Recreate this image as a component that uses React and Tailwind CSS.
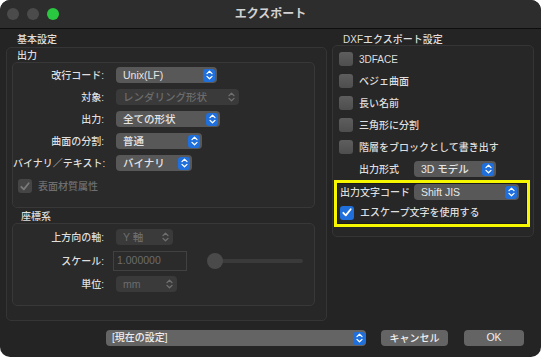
import React from "react";

const font = { fontFamily: '"Liberation Sans", "Noto Sans CJK JP", "Noto Sans", sans-serif' };

function Stepper({ disabled }) {
  if (disabled) {
    return (
      <span className="flex h-[13px] w-[12px] items-center justify-center">
        <svg width="7" height="10" viewBox="0 0 7 10" fill="none" stroke="#707070" strokeWidth="1.3" strokeLinecap="round" strokeLinejoin="round">
          <path d="M1 3.6 L3.5 1.2 L6 3.6" />
          <path d="M1 6.4 L3.5 8.8 L6 6.4" />
        </svg>
      </span>
    );
  }
  return (
    <span className="flex h-[13px] w-[12px] items-center justify-center rounded-[3px] bg-[#1f6fdc]">
      <svg width="7" height="10" viewBox="0 0 7 10" fill="none" stroke="#ffffff" strokeWidth="1.3" strokeLinecap="round" strokeLinejoin="round">
        <path d="M1 3.6 L3.5 1.2 L6 3.6" />
        <path d="M1 6.4 L3.5 8.8 L6 6.4" />
      </svg>
    </span>
  );
}

function Popup({ text, w, disabled }) {
  return (
    <div
      className={
        "flex h-[16px] items-center justify-between whitespace-nowrap rounded-[4px] pl-[7px] pr-[2px] text-[10.5px] font-medium " +
        (disabled ? "bg-[#3a3a3a] text-[#6c6c6c]" : "bg-[#585858] text-[#e6e6e6]")
      }
      style={{ width: w }}
    >
      <span className="leading-none">{text}</span>
      <Stepper disabled={disabled} />
    </div>
  );
}

function Check({ checked, disabled }) {
  if (checked) {
    return (
      <span className={"flex h-[14px] w-[14px] shrink-0 items-center justify-center rounded-[3px] " + (disabled ? "bg-[#454545]" : "bg-[#1f6fdc]")}>
        <svg width="10" height="9" viewBox="0 0 10 9" fill="none" stroke={disabled ? "#7a7a7a" : "#ffffff"} strokeWidth="1.8" strokeLinecap="round" strokeLinejoin="round">
          <path d="M1.3 4.8 L3.8 7.4 L8.7 1.3" />
        </svg>
      </span>
    );
  }
  return <span className="h-[14px] w-[14px] shrink-0 rounded-[3px] bg-gradient-to-b from-[#5e5e5e] to-[#4e4e4e]" />;
}

const lbl = "whitespace-nowrap text-[10px] font-medium text-[#dedede]";

function Row({ label, children, h = "h-[22px]" }) {
  return (
    <div className={"flex items-center " + h}>
      <div className={"w-[92px] pr-[1px] text-right " + lbl}>{label}</div>
      <div className="ml-[11px] flex items-center">{children}</div>
    </div>
  );
}

function CheckRow({ label, checked }) {
  return (
    <div className="flex h-[22px] items-center gap-[6px]">
      <Check checked={checked} />
      <span className={lbl}>{label}</span>
    </div>
  );
}

export default function App() {
  return (
    <div className="h-[359px] w-[541px] bg-white" style={font}>
      <div className="flex h-[357px] w-[541px] flex-col overflow-hidden rounded-[10px] bg-[#242424]">
        {/* title bar */}
        <div className="relative flex h-[29px] items-center border-b border-[#0d0d0d] bg-[#2d2d2d]">
          <div className="ml-[7px] flex gap-[8px]">
            <span className="h-[12px] w-[12px] rounded-full bg-[#4b4b4b]" />
            <span className="h-[12px] w-[12px] rounded-full bg-[#4b4b4b]" />
            <span className="h-[12px] w-[12px] rounded-full bg-[#2ac840]" />
          </div>
          <div className="absolute inset-0 flex items-center justify-center text-[12px] font-bold text-[#d2d2d2]">
            エクスポート
          </div>
        </div>

        {/* body */}
        <div className="flex pl-[6px]">
          {/* left */}
          <div className="flex w-[321px] flex-col">
            <div className={"h-[18px] pl-[11px] pt-[5px] leading-[12px] " + lbl}>基本設定</div>
            <div className="flex h-[274px] flex-col rounded-[5px] border border-[#353535] bg-[#272727] pl-[5px] pr-[11px]">
              <div className={"h-[14px] pl-[5px] pt-[2px] leading-[11px] " + lbl}>出力</div>
              <div className="flex h-[146px] flex-col rounded-[5px] border border-[#383838] bg-[#2a2a2a] pt-[1px]">
                <Row label="改行コード:"><Popup text="Unix(LF)" w={101} /></Row>
                <Row label="対象:"><Popup text="レンダリング形状" w={123} disabled /></Row>
                <Row label="出力:"><Popup text="全ての形状" w={104} /></Row>
                <Row label="曲面の分割:"><Popup text="普通" w={86} /></Row>
                <Row label="バイナリ／テキスト:"><Popup text="バイナリ" w={76} /></Row>
                <div className="flex h-[24px] items-center gap-[6px] pl-[5px]">
                  <Check checked disabled />
                  <span className="whitespace-nowrap text-[10px] font-medium text-[#6e6e6e]">表面材質属性</span>
                </div>
              </div>
              <div className={"h-[15px] pl-[9px] pt-[3px] leading-[11px] " + lbl}>座標系</div>
              <div className="flex h-[83px] flex-col rounded-[5px] border border-[#383838] bg-[#2a2a2a] pt-[1px]">
                <Row label="上方向の軸:" h="h-[24px]"><Popup text="Y 軸" w={57} disabled /></Row>
                <div className="flex h-[24px] items-center">
                  <div className={"w-[92px] pr-[1px] text-right " + lbl}>スケール:</div>
                  <div className="ml-[8px] flex h-[20px] w-[74px] items-center border border-[#414141] bg-[#2b2b2b] pl-[3px] text-[10.5px] text-[#6c6c6c]">
                    1.000000
                  </div>
                  <div className="relative ml-[20px] flex h-[16px] w-[96px] items-center">
                    <div className="ml-[8px] h-[4px] w-[88px] rounded-full bg-[#3a3a3a]" />
                    <div className="absolute left-0 top-0 h-[16px] w-[16px] rounded-full bg-[#4a4a4a]" />
                  </div>
                </div>
                <Row label="単位:" h="h-[22px]"><Popup text="mm" w={61} disabled /></Row>
              </div>
            </div>
          </div>

          {/* right */}
          <div className="ml-[5px] flex w-[202px] flex-col">
            <div className={"h-[16px] pl-[11px] pt-[5px] leading-[12px] " + lbl}>DXFエクスポート設定</div>
            <div className="flex h-[192px] flex-col rounded-[5px] border border-[#353535] bg-[#272727] pl-[6px] pt-[2px]">
              <CheckRow label="3DFACE" />
              <CheckRow label="ベジェ曲面" />
              <CheckRow label="長い名前" />
              <CheckRow label="三角形に分割" />
              <CheckRow label="階層をブロックとして書き出す" />
              <div className="flex h-[22px] items-center">
                <span className={"w-[75px] pl-[20px] " + lbl}>出力形式</span>
                <Popup text="3D モデル" w={82} />
              </div>
              <div className="-ml-[5px] w-[196px] border-[3px] border-[#f7f700]">
                <div className="border border-[#1a1a1a] pl-[2px]">
                  <div className="flex h-[16px] items-center">
                    <span className={"w-[74px] " + lbl}>出力文字コード</span>
                    <Popup text="Shift JIS" w={105} />
                  </div>
                  <div className="flex h-[23px] items-center gap-[6px] pt-[2px]">
                    <Check checked />
                    <span className={lbl}>エスケープ文字を使用する</span>
                  </div>
                </div>
              </div>
            </div>
          </div>
        </div>

        {/* bottom */}
        <div className="mt-[9px] flex items-center pl-[106px]">
          <div className="flex h-[16px] w-[260px] items-center justify-between rounded-[4px] bg-[#646464] pl-[6px] pr-[1px] text-[10px] font-medium text-[#eeeeee]">
            <span className="leading-none">[現在の設定]</span>
            <Stepper />
          </div>
          <div className="ml-[15px] flex h-[16px] w-[67px] items-center justify-center rounded-[4px] bg-[#646464] text-[10px] font-medium text-[#eeeeee]">キャンセル</div>
          <div className="ml-[16px] flex h-[16px] w-[60px] items-center justify-center rounded-[4px] bg-[#646464] text-[10.5px] font-medium text-[#eeeeee]">OK</div>
        </div>
      </div>
    </div>
  );
}
